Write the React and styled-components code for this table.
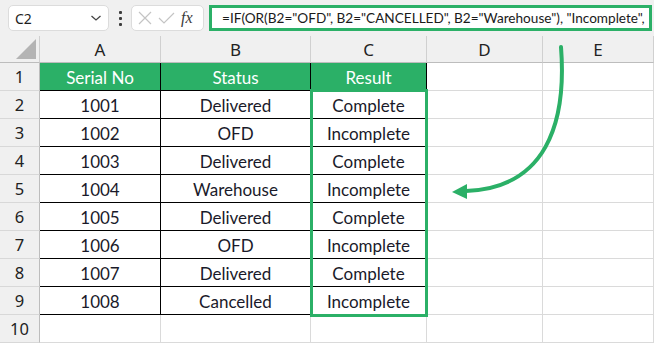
import React from "react";
import styled, { createGlobalStyle } from "styled-components";

const GREEN = "#2bb067";

const GlobalStyle = createGlobalStyle`
  html, body {
    margin: 0;
    padding: 0;
    background: #ffffff;
  }
  body {
    font-family: "Lato", "Liberation Sans", sans-serif;
  }
`;

const Sheet = styled.div`
  position: relative;
  width: 654px;
  height: 343px;
  overflow: hidden;
  background: #ffffff;
`;

const Toolbar = styled.div`
  height: 36px;
  display: flex;
  align-items: center;
  padding: 0 2px 0 8px;
  background: #f0f0f0;
  box-sizing: border-box;
`;

const NameBox = styled.div`
  width: 101px;
  height: 26px;
  box-sizing: border-box;
  display: flex;
  align-items: center;
  justify-content: space-between;
  padding: 0 6px 0 6px;
  background: #ffffff;
  border: 1px solid #dcdcdc;
  border-radius: 5px;
  font-family: "Noto Sans", "Liberation Sans", sans-serif;
  font-size: 14px;
  color: #1e1e1e;
`;

const Dots = styled.div`
  width: 22px;
  display: flex;
  flex-direction: column;
  align-items: center;
  gap: 3px;
  span {
    width: 3px;
    height: 3px;
    background: #3c3c3c;
    border-radius: 1px;
  }
`;

const FxBox = styled.div`
  width: 73px;
  height: 26px;
  box-sizing: border-box;
  display: flex;
  align-items: center;
  gap: 4px;
  padding: 0 4px 0 5px;
  background: #ffffff;
  border: 1px solid #dcdcdc;
  border-radius: 5px;
`;

const FxLabel = styled.span`
  font-family: "Liberation Serif", serif;
  font-style: italic;
  font-size: 16px;
  color: #3a3a3a;
  margin-left: 2px;
`;

const FormulaBar = styled.div`
  margin-left: 5px;
  flex: 1;
  height: 26px;
  box-sizing: border-box;
  border: 3px solid ${GREEN};
  background: #ffffff;
  display: flex;
  align-items: center;
  padding-left: 10px;
  white-space: nowrap;
  overflow: hidden;
  font-size: 13.6px;
  color: #1a1a1a;
`;

const Grid = styled.div`
  display: grid;
  grid-template-columns: 40px 121px 150px 116px 116px 111px;
  grid-template-rows: 27px repeat(10, 28px);
`;

const Corner = styled.div`
  background: #f0f0f0;
  border-right: 1px solid #d0d0d0;
  border-bottom: 1px solid #bdbdbd;
  display: flex;
  align-items: flex-end;
  justify-content: flex-end;
  padding: 0 3px 3px 0;
  box-sizing: border-box;
  &::after {
    content: "";
    width: 0;
    height: 0;
    border-left: 20px solid transparent;
    border-bottom: 20px solid #b4b4b4;
  }
`;

const ColHead = styled.div`
  background: #f0f0f0;
  border-right: 1px solid #d0d0d0;
  border-bottom: 1px solid #bdbdbd;
  display: flex;
  align-items: center;
  justify-content: center;
  font-family: "Noto Sans", "Liberation Sans", sans-serif;
  font-size: 17px;
  color: #222222;
  box-sizing: border-box;
`;

const RowHead = styled.div`
  background: #f0f0f0;
  border-right: 1px solid #bdbdbd;
  border-bottom: 1px solid #d8d8d8;
  display: flex;
  align-items: center;
  justify-content: center;
  font-family: "Noto Sans", "Liberation Sans", sans-serif;
  font-size: 16.5px;
  color: #222222;
  box-sizing: border-box;
`;

const Cell = styled.div`
  display: flex;
  align-items: center;
  justify-content: center;
  box-sizing: border-box;
  padding-top: 1px;
  font-size: 17px;
  color: ${(p) => (p.$head ? "#ffffff" : "#1a1a2a")};
  background: ${(p) => (p.$head ? GREEN : "#ffffff")};
  border-right: 1px solid ${(p) => (p.$table ? "#000000" : "#dadada")};
  border-bottom: 1px solid ${(p) => (p.$table ? "#000000" : "#dadada")};
`;

const Selection = styled.div`
  position: absolute;
  left: 310px;
  top: 89px;
  width: 118px;
  height: 228px;
  box-sizing: border-box;
  border: 3px solid ${GREEN};
  pointer-events: none;
`;

const Arrow = styled.svg`
  position: absolute;
  left: 0;
  top: 0;
  pointer-events: none;
`;

const rows = [
  ["1001", "Delivered", "Complete"],
  ["1002", "OFD", "Incomplete"],
  ["1003", "Delivered", "Complete"],
  ["1004", "Warehouse", "Incomplete"],
  ["1005", "Delivered", "Complete"],
  ["1006", "OFD", "Incomplete"],
  ["1007", "Delivered", "Complete"],
  ["1008", "Cancelled", "Incomplete"],
];

const Chevron = () => (
  <svg width="12" height="8" viewBox="0 0 12 8">
    <path d="M1.5 2 L6 6 L10.5 2" fill="none" stroke="#444" strokeWidth="1.3" />
  </svg>
);

const Cancel = () => (
  <svg width="16" height="16" viewBox="0 0 16 16">
    <path d="M2 2 L14 14 M14 2 L2 14" stroke="#c4c4c4" strokeWidth="1.2" />
  </svg>
);

const Enter = () => (
  <svg width="18" height="16" viewBox="0 0 18 16">
    <path d="M2 8 L7 13 L17 3" fill="none" stroke="#c4c4c4" strokeWidth="1.2" />
  </svg>
);

export default function App() {
  return (
    <>
      <GlobalStyle />
      <Sheet>
        <Toolbar>
          <NameBox>
            C2
            <Chevron />
          </NameBox>
          <Dots>
            <span />
            <span />
            <span />
          </Dots>
          <FxBox>
            <Cancel />
            <Enter />
            <FxLabel>fx</FxLabel>
          </FxBox>
          <FormulaBar>
            =IF(OR(B2="OFD", B2="CANCELLED", B2="Warehouse"), "Incomplete",
          </FormulaBar>
        </Toolbar>

        <Grid>
          <Corner />
          {["A", "B", "C", "D", "E"].map((c) => (
            <ColHead key={c}>{c}</ColHead>
          ))}

          <RowHead>1</RowHead>
          <Cell $head $table>Serial No</Cell>
          <Cell $head $table>Status</Cell>
          <Cell $head $table>Result</Cell>
          <Cell />
          <Cell />

          {rows.map((r, i) => (
            <React.Fragment key={r[0]}>
              <RowHead>{i + 2}</RowHead>
              <Cell $table>{r[0]}</Cell>
              <Cell $table>{r[1]}</Cell>
              <Cell $table>{r[2]}</Cell>
              <Cell />
              <Cell />
            </React.Fragment>
          ))}

          <RowHead>10</RowHead>
          <Cell />
          <Cell />
          <Cell />
          <Cell />
          <Cell />
        </Grid>

        <Selection />

        <Arrow width="654" height="343" viewBox="0 0 654 343">
          <path
            d="M561 47 C 567 125, 545 188, 466 191"
            fill="none"
            stroke={GREEN}
            strokeWidth="4"
            strokeLinecap="round"
          />
          <path d="M452 192 L467 184 L467 199 Z" fill={GREEN} />
        </Arrow>
      </Sheet>
    </>
  );
}
